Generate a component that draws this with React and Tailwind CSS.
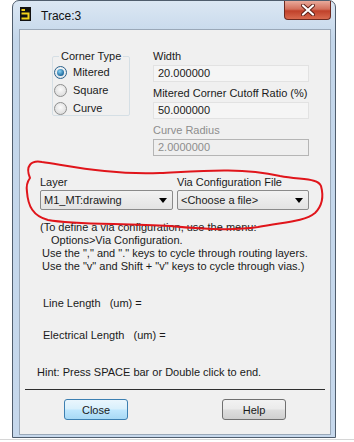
import React from "react";

function Radio({ checked, label }) {
  return (
    <div className="flex items-center h-[18px]">
      <div
        className={
          "ml-[1px] w-[13px] h-[13px] rounded-full border flex items-center justify-center " +
          (checked
            ? "border-[#2c628b] bg-[radial-gradient(circle_at_50%_40%,#ffffff,#d6dde4)]"
            : "border-[#8e8f8f] bg-[radial-gradient(circle_at_50%_40%,#fbfbfb,#d4d4d4)]")
        }
      >
        {checked && (
          <div className="w-[7px] h-[7px] rounded-full bg-[radial-gradient(circle_at_40%_35%,#8ad2f3,#1d6a9e_70%,#134a72)]" />
        )}
      </div>
      <span className="ml-[6px] leading-[14px]">{label}</span>
    </div>
  );
}

function Field({ value, disabled }) {
  return (
    <div
      className={
        "mt-[2px] h-[17px] w-[156px] border pl-[4px] leading-[15px] " +
        (disabled
          ? "border-[#b5b5b5] bg-[#efefef] text-[#8d8d8d]"
          : "border-[#e2e2e2] bg-[#f5f5f5] text-[#1a1a1a]")
      }
    >
      {value}
    </div>
  );
}

function Select({ value, w }) {
  return (
    <div
      className={
        "h-[20px] rounded-[2px] border border-[#8a8a8a] bg-[linear-gradient(#f2f2f2,#e3e3e3)] flex items-center justify-between pl-[3px] pr-[5px] " +
        w
      }
    >
      <span className="leading-[14px]">{value}</span>
      <svg width="8" height="5" viewBox="0 0 8 5">
        <path d="M0 0 H8 L4 5 Z" fill="#000" />
      </svg>
    </div>
  );
}

export default function App() {
  return (
    <div className="relative w-[354px] h-[442px] bg-white overflow-hidden font-['Liberation_Sans',Arial,sans-serif] text-[11px] text-[#1a1a1a]">
      <div className="ml-[12px] w-[324px] h-[438px] rounded-t-[7px] border border-[#4f5d6d] bg-[linear-gradient(#dbe7f3,#c3d6ea_40px,#c6d8ec)] flex flex-col">
        {/* title bar */}
        <div className="h-[28px] flex items-start">
          <svg className="ml-[7px] mt-[6px]" width="11" height="14" viewBox="0 0 11 14">
            <rect width="11" height="14" fill="#111" />
            <path d="M1.5 3 H5" stroke="#f2d21a" strokeWidth="2" />
            <path d="M1.5 6.5 H8.5 V11.5 H1.5" stroke="#f2d21a" strokeWidth="2" fill="none" />
          </svg>
          <span className="ml-[10px] mt-[7px] text-[12px] leading-[16px] text-[#111]">Trace:3</span>
          <div className="ml-auto mr-[4px] w-[47px] h-[19px] rounded-b-[4px] border border-t-0 border-[#6d2a20] bg-[linear-gradient(#e9aa9b,#d3705c_45%,#c0412a_55%,#d86a4f)] flex items-center justify-center">
            <svg width="14" height="12" viewBox="0 0 14 12">
              <path d="M2 1.5 L12 10.5 M12 1.5 L2 10.5" stroke="#5a1e16" strokeWidth="4" strokeLinecap="round" />
              <path d="M2 1.5 L12 10.5 M12 1.5 L2 10.5" stroke="#ffffff" strokeWidth="2.2" strokeLinecap="round" />
            </svg>
          </div>
        </div>
        {/* client */}
        <div className="ml-[6px] w-[312px] h-[406px] border border-[#9aa8b8] bg-[#f0f0f0] flex flex-col">
          <div className="pt-[19px] flex">
            <fieldset className="ml-[32px] w-[78px] h-[67px] border border-[#d5dfe5] rounded-[2px] px-0">
              <legend className="ml-[6px] px-[2px] leading-[14px]">Corner Type</legend>
              <Radio checked label="Mitered" />
              <Radio label="Square" />
              <Radio label="Curve" />
            </fieldset>
            <div className="ml-[23px] flex flex-col">
              <div className="h-[14px] leading-[14px]">Width</div>
              <Field value="20.000000" />
              <div className="mt-[4px] h-[14px] leading-[14px]">Mitered Corner Cutoff Ratio (%)</div>
              <Field value="50.000000" />
              <div className="mt-[4px] h-[14px] leading-[14px] text-[#8d8d8d]">Curve Radius</div>
              <Field value="2.0000000" disabled />
            </div>
          </div>

          <div className="mt-[19px] ml-[20px] flex gap-[4px]">
            <div className="flex flex-col">
              <div className="h-[14px] leading-[14px]">Layer</div>
              <div className="mt-[1px]">
                <Select value="M1_MT:drawing" w="w-[133px]" />
              </div>
            </div>
            <div className="flex flex-col">
              <div className="h-[14px] leading-[14px]">Via Configuration File</div>
              <div className="mt-[1px]">
                <Select value="<Choose a file>" w="w-[132px]" />
              </div>
            </div>
          </div>

          <div className="mt-[10px] flex flex-col">
            <div className="ml-[20px] h-[14px] leading-[14px]">(To define a via configuration, use the menu:</div>
            <div className="ml-[31px] h-[13px] leading-[13px]">Options&gt;Via Configuration.</div>
            <div className="ml-[22px] h-[13px] leading-[13px]">Use the "," and "." keys to cycle through routing layers.</div>
            <div className="ml-[22px] h-[13px] leading-[13px]">Use the "v" and Shift + "v" keys to cycle through vias.)</div>
          </div>

          <div className="mt-[23px] ml-[23px] h-[14px] leading-[14px] whitespace-pre">Line Length   (um) =</div>
          <div className="mt-[18px] ml-[23px] h-[14px] leading-[14px] whitespace-pre">Electrical Length   (um) =</div>
          <div className="mt-[23px] ml-[17px] h-[14px] leading-[14px]">Hint: Press SPACE bar or Double click to end.</div>

          <div className="mt-[10px] ml-[5px] w-[300px] h-[1px] bg-[#2e2e2e]" />

          <div className="mt-[9px] flex">
            <button className="ml-[44px] w-[64px] h-[21px] rounded-[3px] border border-[#3c7fb1] bg-[linear-gradient(#eaf6fd,#d9f0fc_45%,#bee6fd_55%,#a7d9f5)] text-[11px] leading-[14px] text-[#1a1a1a]">
              Close
            </button>
            <button className="ml-[94px] w-[64px] h-[21px] rounded-[3px] border border-[#707070] bg-[linear-gradient(#f2f2f2,#ebebeb_45%,#dddddd_55%,#cfcfcf)] text-[11px] leading-[14px] text-[#1a1a1a]">
              Help
            </button>
          </div>
        </div>
      </div>
      <div className="mt-[1px] h-[1px] bg-[#d6d6d6]" />

      {/* red hand-drawn annotation */}
      <svg className="absolute left-0 top-0 pointer-events-none" width="354" height="442" viewBox="0 0 354 442">
        <path
          d="M30 178 C25 166 31 160 42 162 C70 166 110 175 160 173 C200 171 240 167 280 176 C302 180 318 178 321 186 C324 197 322 206 315 213 C304 222 282 222 258 227 C232 231 200 229 170 226 C120 223 75 225 48 220 C33 216 28 206 27 192 C26 186 27 182 30 178"
          fill="none"
          stroke="#e0151b"
          strokeWidth="2"
          strokeLinecap="round"
        />
      </svg>
    </div>
  );
}
